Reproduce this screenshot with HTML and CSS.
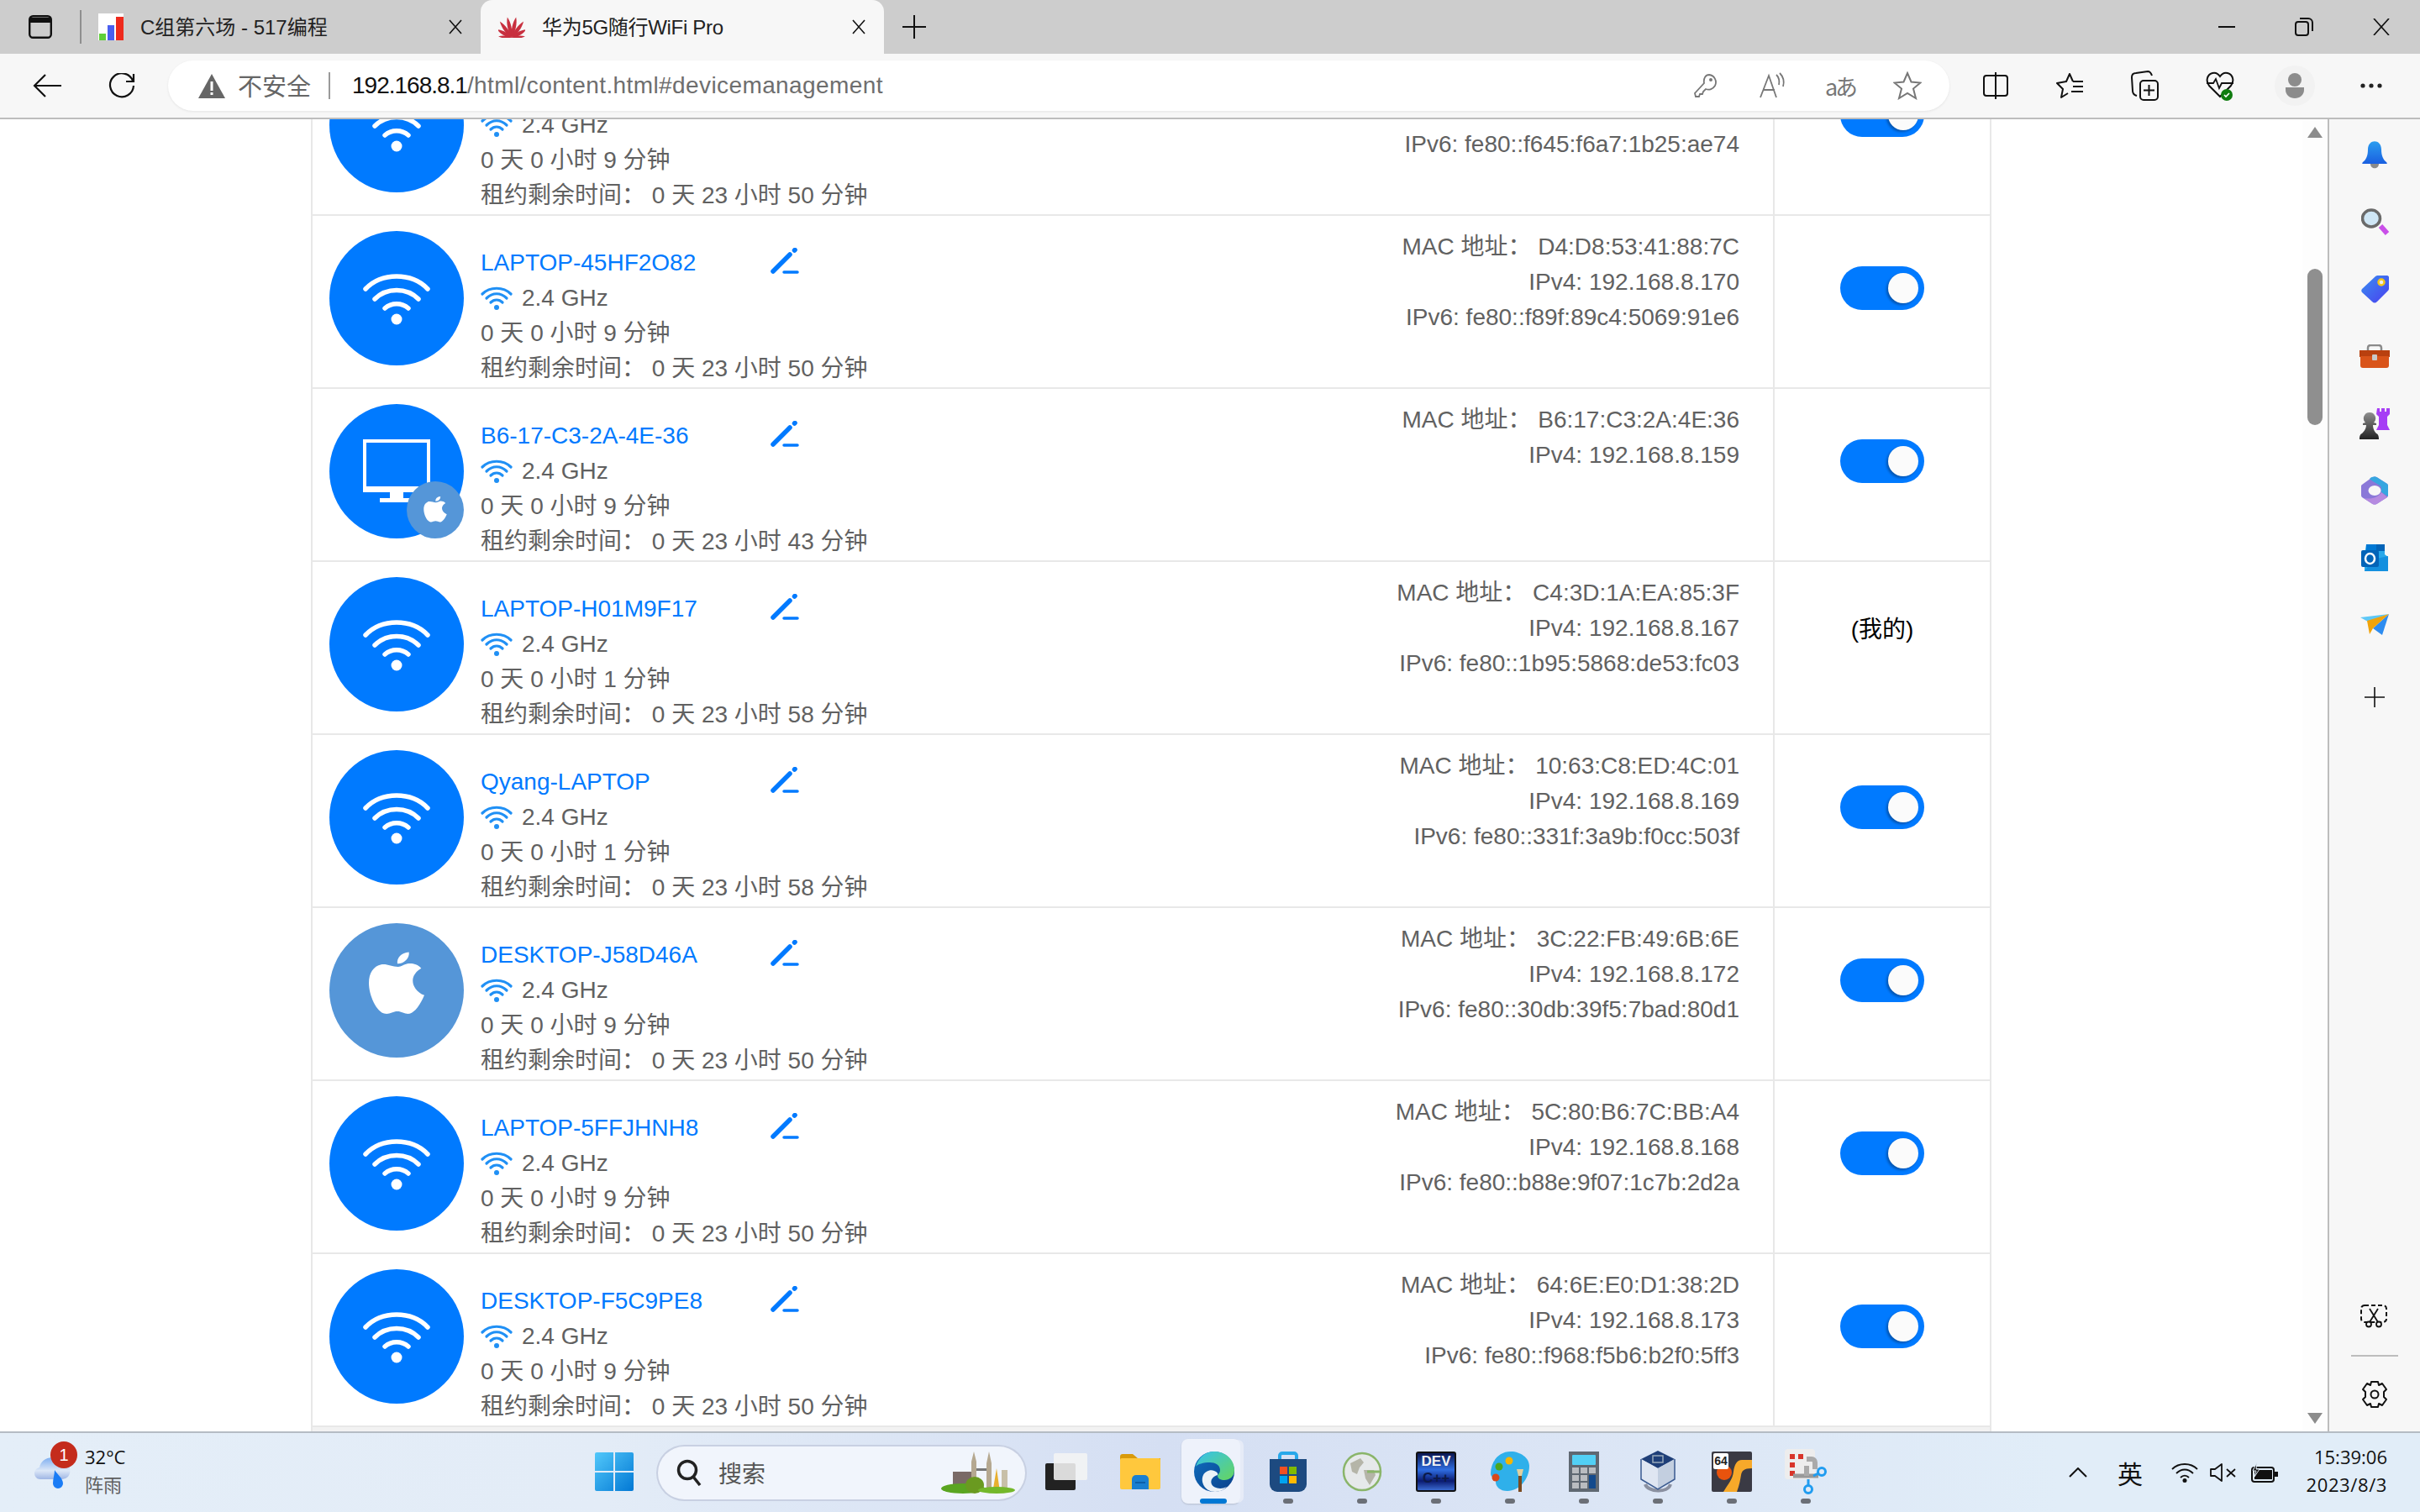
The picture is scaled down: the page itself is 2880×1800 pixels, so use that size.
FILE: index.html
```html
<!DOCTYPE html>
<html lang="zh-CN">
<head>
<meta charset="utf-8">
<title>华为5G随行WiFi Pro</title>
<link rel="stylesheet" href="styles.css">
</head>
<body>
<svg class="defs" width="0" height="0" aria-hidden="true">
  <symbol id="wifi-big" viewBox="0 0 80 64">
    <g fill="none" stroke="#fff" stroke-width="5.500" stroke-linecap="round">
      <path d="M3 21C22 1 58 1 77 21"/><path d="M14 33C28 19 52 19 66 33"/><path d="M26 44C34 37 46 37 54 44"/>
    </g><circle cx="40" cy="57" r="6.500" fill="#fff"/>
  </symbol>
  <symbol id="wifi-small" viewBox="0 0 38 28">
    <g fill="none" stroke="#2090f5" stroke-width="3.200" stroke-linecap="round">
      <path d="M2 9C11 0 27 0 36 9"/><path d="M7 14C14 7 24 7 31 14"/><path d="M12 19C16 15 22 15 26 19"/>
    </g><circle cx="19" cy="25" r="3" fill="#2090f5"/>
  </symbol>
  <symbol id="pencil" viewBox="0 0 34 32">
    <g fill="none" stroke="#007aff" stroke-linecap="round">
      <path d="M3 28L23 8" stroke-width="5.500"/><path d="M28.500 3L29 2.500" stroke-width="5.500"/><path d="M16 29H32" stroke-width="3.500"/>
    </g>
  </symbol>
  <symbol id="apple" viewBox="0 0 72 84">
    <path fill="#fff" d="M38 19C30 19 24 15 16 16C6 18 0 27 0 40C0 56 10 78 21 80C27 81 31 77 37 77C43 77 47 81 53 80C60 78 67 68 72 56C62 52 57 44 57 37C57 31 61 25 68 21C63 15 55 14 50 15C45 16 42 19 38 19Z"/>
    <path fill="#fff" d="M37 15C36 7 42 1 52 0C53 8 46 15 37 15Z"/>
  </symbol>
</svg>

<header class="tabstrip">
  <div class="tab-menu">
    <svg width="28" height="28" viewBox="0 0 28 28"><rect x="1.200" y="1.200" width="25.600" height="25.600" rx="4" fill="none" stroke="#111" stroke-width="2.400"/><path d="M2 3h24v6H2z" fill="#111"/></svg>
  </div>
  <div class="tab-sep"></div>
  <div class="tab">
    <svg class="tab-fav" width="30" height="32" viewBox="0 0 30 32"><rect width="30" height="32" fill="#fff"/><rect x="1" y="24" width="8" height="8" fill="#5fd03a"/><rect x="11" y="14" width="8" height="18" fill="#4a5ff0"/><rect x="21" y="4" width="9" height="28" fill="#ee2a1d"/></svg>
    <span class="tab-title">C组第六场 - 517编程</span>
    <span class="tab-close"><svg width="16" height="18" viewBox="0 0 16 18"><path d="M1 1l14 16M15 1L1 17" stroke="#111" stroke-width="1.600" fill="none"/></svg></span>
  </div>
  <div class="tab tab-active">
    <svg class="tab-fav" width="32" height="26" viewBox="0 0 32 26"><g fill="#c8303f"><path d="M16 26C13 18 13 8 16 1C19 8 19 18 16 26Z" transform="rotate(-12 16 26)"/><path d="M16 26C13 18 13 8 16 1C19 8 19 18 16 26Z" transform="rotate(12 16 26)"/><path d="M16 26C13 19 13 9 16 2C19 9 19 19 16 26Z" transform="rotate(-36 16 26)"/><path d="M16 26C13 19 13 9 16 2C19 9 19 19 16 26Z" transform="rotate(36 16 26)"/><path d="M16 26C13 20 13 12 16 6C19 12 19 20 16 26Z" transform="rotate(-60 16 26)"/><path d="M16 26C13 20 13 12 16 6C19 12 19 20 16 26Z" transform="rotate(60 16 26)"/><path d="M16 26C14 21 14 15 16 10C18 15 18 21 16 26Z" transform="rotate(-84 16 26)"/><path d="M16 26C14 21 14 15 16 10C18 15 18 21 16 26Z" transform="rotate(84 16 26)"/></g></svg>
    <span class="tab-title">华为5G随行WiFi Pro</span>
    <span class="tab-close"><svg width="16" height="18" viewBox="0 0 16 18"><path d="M1 1l14 16M15 1L1 17" stroke="#111" stroke-width="1.600" fill="none"/></svg></span>
  </div>
  <div class="tab-new"><svg width="28" height="28" viewBox="0 0 28 28"><path d="M14 0v28M0 14h28" stroke="#111" stroke-width="2"/></svg></div>
  <div class="win-btns">
    <span class="win-btn"><svg width="20" height="2" viewBox="0 0 20 2"><path d="M0 1h20" stroke="#111" stroke-width="2"/></svg></span>
    <span class="win-btn"><svg width="22" height="22" viewBox="0 0 22 22"><rect x="1" y="5" width="15" height="16" rx="3" fill="none" stroke="#111" stroke-width="2"/><path d="M6 1h10a5 5 0 0 1 5 5v10" fill="none" stroke="#111" stroke-width="2"/></svg></span>
    <span class="win-btn"><svg width="20" height="20" viewBox="0 0 20 20"><path d="M1 0l18 20M19 0L1 20" stroke="#111" stroke-width="1.700" fill="none"/></svg></span>
  </div>
</header>

<nav class="toolbar">
  <span class="tool-btn"><svg width="34" height="28" viewBox="0 0 34 28"><path d="M15 1L2 14l13 13M2 14h32" fill="none" stroke="#111" stroke-width="2.200"/></svg></span>
  <span class="tool-btn"><svg width="32" height="30" viewBox="0 0 32 30"><path d="M29 9A14 14 0 1 0 30 15" fill="none" stroke="#111" stroke-width="2.200"/><path d="M30 1v9H21" fill="none" stroke="#111" stroke-width="2.200"/></svg></span>
  <div class="address">
    <svg class="warn" width="32" height="29" viewBox="0 0 32 29"><path d="M16 0L32 29H0z" fill="#666"/><path d="M14.500 9h3v11h-3zM14.500 22h3v3h-3z" fill="#fff"/></svg>
    <span class="insecure">不安全</span>
    <span class="addr-sep"></span>
    <span class="url"><b class="url-host">192.168.8.1</b>/html/content.html#devicemanagement</span>
    <div class="addr-icons">
      <span class="addr-btn"><svg width="28" height="30" viewBox="0 0 28 30"><path d="M18 2a9 9 0 0 1 7 13 9 9 0 0 1-11 4l-3 3-1 3H7l-1 3H2l-1-4L12 12C11 6 14 2 18 2z" fill="none" stroke="#777" stroke-width="1.800"/><circle cx="20" cy="8" r="2" fill="#777"/></svg></span>
      <span class="addr-btn"><svg width="32" height="32" viewBox="0 0 32 32"><path d="M1 30L11 4l9 26M4 21h14" fill="none" stroke="#777" stroke-width="1.800"/><path d="M20 3c3 3 4 7 3 12M24 1c4 4 6 9 4 16" fill="none" stroke="#777" stroke-width="1.800"/></svg></span>
      <span class="addr-btn"><span class="trans">aあ</span></span>
      <span class="addr-btn"><svg width="34" height="34" viewBox="0 0 34 34"><path d="M17 2l4.500 10.500 11 1-8.500 7 3 11.500L17 26l-10 6 3-11.500-8.500-7 11-1z" fill="none" stroke="#777" stroke-width="2"/></svg></span>
    </div>
  </div>
  <div class="tool-right">
    <span class="tool-btn"><svg width="30" height="32" viewBox="0 0 30 32"><rect x="1" y="4" width="28" height="24" rx="3" fill="none" stroke="#111" stroke-width="2"/><path d="M15 0v32" stroke="#111" stroke-width="2"/></svg></span>
    <span class="tool-btn"><svg width="34" height="30" viewBox="0 0 34 30"><path d="M20 10L16 1l-4 9L1 12l7 7-2 10 8-5" fill="none" stroke="#111" stroke-width="2" stroke-linejoin="round"/><path d="M20 10h12M20 16h12M18 22h14" stroke="#111" stroke-width="2"/></svg></span>
    <span class="tool-btn"><svg width="34" height="36" viewBox="0 0 34 36"><path d="M7 30C3 29 2 27 2 24L1 8c0-3 2-5 5-5l14-2c3 0 4 2 5 5" fill="none" stroke="#111" stroke-width="2"/><rect x="11" y="12" width="21" height="23" rx="4" fill="none" stroke="#111" stroke-width="2"/><path d="M21.500 17v13M15 23.500h13" stroke="#111" stroke-width="2"/></svg></span>
    <span class="tool-btn"><svg width="34" height="36" viewBox="0 0 34 36"><path d="M17 31L4 18C0 13 1 5 8 3c4-1 7 1 9 4 2-3 5-5 9-4 7 2 8 10 4 15L17 31z" fill="none" stroke="#111" stroke-width="2"/><path d="M1 15h8l3-5 4 11 3-6h14" fill="none" stroke="#111" stroke-width="1.800"/><circle cx="25" cy="29" r="7" fill="#107c10"/><path d="M22 29l2 2 4-4" fill="none" stroke="#fff" stroke-width="1.600"/></svg></span>
    <span class="tool-btn"><span class="avatar"><svg width="24" height="30" viewBox="0 0 24 30"><circle cx="12" cy="8" r="8" fill="#8c8c8c"/><path d="M1 17h22v3c0 6-5 10-11 10S1 26 1 20z" fill="#8c8c8c"/></svg></span></span>
    <span class="tool-btn tool-more"><svg width="26" height="6" viewBox="0 0 26 6"><circle cx="3" cy="3" r="2.600" fill="#222"/><circle cx="13" cy="3" r="2.600" fill="#222"/><circle cx="23" cy="3" r="2.600" fill="#222"/></svg></span>
  </div>
</nav>

<div class="workspace">
  <main class="viewport">
    <div class="table">

      <section class="row">
        <div class="avatar-cell"><div class="dev-circle"><svg class="ic-wifi" width="80" height="64"><use href="#wifi-big"/></svg></div></div>
        <div class="info">
          <div class="line-blank"></div>
          <div class="band"><svg width="38" height="28"><use href="#wifi-small"/></svg><span>2.4 GHz</span></div>
          <div>0 天 0 小时 9 分钟</div>
          <div>租约剩余时间： 0 天 23 小时 50 分钟</div>
        </div>
        <div class="addr"><div class="line-blank"></div><div class="line-blank"></div><div>IPv6: fe80::f645:f6a7:1b25:ae74</div></div>
        <div class="ctl"><span class="toggle"><i class="knob"></i></span></div>
      </section>

      <section class="row">
        <div class="avatar-cell"><div class="dev-circle"><svg class="ic-wifi" width="80" height="64"><use href="#wifi-big"/></svg></div></div>
        <div class="info">
          <div class="name-line"><a class="dev-name">LAPTOP-45HF2O82</a><svg class="pen" width="34" height="32"><use href="#pencil"/></svg></div>
          <div class="band"><svg width="38" height="28"><use href="#wifi-small"/></svg><span>2.4 GHz</span></div>
          <div>0 天 0 小时 9 分钟</div>
          <div>租约剩余时间： 0 天 23 小时 50 分钟</div>
        </div>
        <div class="addr"><div>MAC 地址： D4:D8:53:41:88:7C</div><div>IPv4: 192.168.8.170</div><div>IPv6: fe80::f89f:89c4:5069:91e6</div></div>
        <div class="ctl"><span class="toggle"><i class="knob"></i></span></div>
      </section>

      <section class="row">
        <div class="avatar-cell"><div class="dev-circle">
          <svg class="ic-mon" width="80" height="76" viewBox="0 0 80 76"><path d="M2 2h76v58H2z" fill="none" stroke="#fff" stroke-width="4"/><path d="M0 56h80v7H0zM32 63h16v8H32zM20 70h40v5H20z" fill="#fff"/></svg>
          <span class="os-badge"><svg width="28" height="32"><use href="#apple"/></svg></span>
        </div></div>
        <div class="info">
          <div class="name-line"><a class="dev-name">B6-17-C3-2A-4E-36</a><svg class="pen" width="34" height="32"><use href="#pencil"/></svg></div>
          <div class="band"><svg width="38" height="28"><use href="#wifi-small"/></svg><span>2.4 GHz</span></div>
          <div>0 天 0 小时 9 分钟</div>
          <div>租约剩余时间： 0 天 23 小时 43 分钟</div>
        </div>
        <div class="addr"><div>MAC 地址： B6:17:C3:2A:4E:36</div><div>IPv4: 192.168.8.159</div></div>
        <div class="ctl"><span class="toggle"><i class="knob"></i></span></div>
      </section>

      <section class="row">
        <div class="avatar-cell"><div class="dev-circle"><svg class="ic-wifi" width="80" height="64"><use href="#wifi-big"/></svg></div></div>
        <div class="info">
          <div class="name-line"><a class="dev-name">LAPTOP-H01M9F17</a><svg class="pen" width="34" height="32"><use href="#pencil"/></svg></div>
          <div class="band"><svg width="38" height="28"><use href="#wifi-small"/></svg><span>2.4 GHz</span></div>
          <div>0 天 0 小时 1 分钟</div>
          <div>租约剩余时间： 0 天 23 小时 58 分钟</div>
        </div>
        <div class="addr"><div>MAC 地址： C4:3D:1A:EA:85:3F</div><div>IPv4: 192.168.8.167</div><div>IPv6: fe80::1b95:5868:de53:fc03</div></div>
        <div class="ctl"><span class="mine">(我的)</span></div>
      </section>

      <section class="row">
        <div class="avatar-cell"><div class="dev-circle"><svg class="ic-wifi" width="80" height="64"><use href="#wifi-big"/></svg></div></div>
        <div class="info">
          <div class="name-line"><a class="dev-name">Qyang-LAPTOP</a><svg class="pen" width="34" height="32"><use href="#pencil"/></svg></div>
          <div class="band"><svg width="38" height="28"><use href="#wifi-small"/></svg><span>2.4 GHz</span></div>
          <div>0 天 0 小时 1 分钟</div>
          <div>租约剩余时间： 0 天 23 小时 58 分钟</div>
        </div>
        <div class="addr"><div>MAC 地址： 10:63:C8:ED:4C:01</div><div>IPv4: 192.168.8.169</div><div>IPv6: fe80::331f:3a9b:f0cc:503f</div></div>
        <div class="ctl"><span class="toggle"><i class="knob"></i></span></div>
      </section>

      <section class="row">
        <div class="avatar-cell"><div class="dev-circle dev-apple"><svg class="ic-apple" width="66" height="78"><use href="#apple"/></svg></div></div>
        <div class="info">
          <div class="name-line"><a class="dev-name">DESKTOP-J58D46A</a><svg class="pen" width="34" height="32"><use href="#pencil"/></svg></div>
          <div class="band"><svg width="38" height="28"><use href="#wifi-small"/></svg><span>2.4 GHz</span></div>
          <div>0 天 0 小时 9 分钟</div>
          <div>租约剩余时间： 0 天 23 小时 50 分钟</div>
        </div>
        <div class="addr"><div>MAC 地址： 3C:22:FB:49:6B:6E</div><div>IPv4: 192.168.8.172</div><div>IPv6: fe80::30db:39f5:7bad:80d1</div></div>
        <div class="ctl"><span class="toggle"><i class="knob"></i></span></div>
      </section>

      <section class="row">
        <div class="avatar-cell"><div class="dev-circle"><svg class="ic-wifi" width="80" height="64"><use href="#wifi-big"/></svg></div></div>
        <div class="info">
          <div class="name-line"><a class="dev-name">LAPTOP-5FFJHNH8</a><svg class="pen" width="34" height="32"><use href="#pencil"/></svg></div>
          <div class="band"><svg width="38" height="28"><use href="#wifi-small"/></svg><span>2.4 GHz</span></div>
          <div>0 天 0 小时 9 分钟</div>
          <div>租约剩余时间： 0 天 23 小时 50 分钟</div>
        </div>
        <div class="addr"><div>MAC 地址： 5C:80:B6:7C:BB:A4</div><div>IPv4: 192.168.8.168</div><div>IPv6: fe80::b88e:9f07:1c7b:2d2a</div></div>
        <div class="ctl"><span class="toggle"><i class="knob"></i></span></div>
      </section>

      <section class="row">
        <div class="avatar-cell"><div class="dev-circle"><svg class="ic-wifi" width="80" height="64"><use href="#wifi-big"/></svg></div></div>
        <div class="info">
          <div class="name-line"><a class="dev-name">DESKTOP-F5C9PE8</a><svg class="pen" width="34" height="32"><use href="#pencil"/></svg></div>
          <div class="band"><svg width="38" height="28"><use href="#wifi-small"/></svg><span>2.4 GHz</span></div>
          <div>0 天 0 小时 9 分钟</div>
          <div>租约剩余时间： 0 天 23 小时 50 分钟</div>
        </div>
        <div class="addr"><div>MAC 地址： 64:6E:E0:D1:38:2D</div><div>IPv4: 192.168.8.173</div><div>IPv6: fe80::f968:f5b6:b2f0:5ff3</div></div>
        <div class="ctl"><span class="toggle"><i class="knob"></i></span></div>
      </section>

      <div class="row-next"></div>
    </div>
  </main>

  <div class="scrollbar">
    <svg width="18" height="13" viewBox="0 0 18 13"><path d="M9 0l9 13H0z" fill="#8c8c8c"/></svg>
    <span class="thumb"></span>
    <svg class="arrow-down" width="18" height="13" viewBox="0 0 18 13"><path d="M0 0h18L9 13z" fill="#8c8c8c"/></svg>
  </div>

  <aside class="sidebar">
    <span class="side-btn"><svg width="30" height="33" viewBox="0 0 30 33"><defs><linearGradient id="bell" x1="0" y1="0" x2="0" y2="1"><stop offset="0" stop-color="#2a9df0"/><stop offset="1" stop-color="#1a5fe0"/></linearGradient></defs><path d="M10 27h10c0 7-10 7-10 0z" fill="#8a8a8a"/><path d="M7 10c0-13 16-13 16 0 0 7 2 12 6 15 1 1 1 2 0 2H1c-1 0-1-1 0-2 4-3 6-8 6-15z" fill="url(#bell)"/></svg></span>
    <span class="side-btn"><svg width="33" height="33" viewBox="0 0 33 33"><path d="M23 21l8 9" stroke="#c94fe8" stroke-width="6"/><ellipse cx="12" cy="12" rx="10.500" ry="10" fill="#cfe6f5" stroke="#6a6a6a" stroke-width="3.500"/></svg></span>
    <span class="side-btn"><svg width="33" height="33" viewBox="0 0 33 33"><defs><linearGradient id="tag" x1="0" y1="0" x2="1" y2="1"><stop offset="0" stop-color="#3a8ff0"/><stop offset="1" stop-color="#4a3ff0"/></linearGradient></defs><path d="M1 16L17 1c1-1 2-1 3-1h11c1 0 2 1 2 2v13c0 1 0 2-1 3L19 31c-2 2-4 2-6 0L1 20c-1-1-1-3 0-4z" fill="url(#tag)"/><circle cx="24" cy="8" r="3.500" fill="#eee" stroke="#f5c518" stroke-width="2.500"/></svg></span>
    <span class="side-btn"><svg width="36" height="28" viewBox="0 0 36 28"><path d="M10 9V4c0-2 1-3 3-3h10c2 0 3 1 3 3v5" fill="none" stroke="#8a8a8a" stroke-width="2.500"/><rect y="7" width="36" height="8" fill="#b9400f"/><path d="M1 14h34v11a3 3 0 0 1-3 3H4a3 3 0 0 1-3-3z" fill="#d9541a"/><rect x="15" y="12" width="6" height="7" rx="1" fill="#c9c9c9"/></svg></span>
    <span class="side-btn"><svg width="36" height="37" viewBox="0 0 36 37"><defs><linearGradient id="pawn" x1="0" y1="0" x2="0" y2="1"><stop offset="0" stop-color="#8f8f8f"/><stop offset="1" stop-color="#222"/></linearGradient></defs><path d="M21 0h3v4h2V0h4v4h2V0h4v7l-3 3v10l3 6H20l3-6V10l-3-3z" fill="#a63df5"/><path d="M12 5a7 7 0 0 1 5 12l3 1v2h-4c0 5 2 8 4 10 3 1 3 5 3 7H0c0-2 0-6 3-7 2-2 5-5 5-10H4v-2l3-1A7 7 0 0 1 12 5z" fill="url(#pawn)"/></svg></span>
    <span class="side-btn"><svg width="32" height="34" viewBox="0 0 32 34"><path d="M1 10L12 2c3-2 5-2 8 0l11 7c1 1 1 2 1 3v10c0 1 0 2-1 3L20 32c-3 2-5 2-8 0L1 25c-1-1-1-2-1-3V12c0-1 0-1 1-2z" fill="#8a78d8"/><path d="M10 3c3-3 7-3 10-1l11 7c1 1 1 2 1 3v12l-8-5V14C24 10 15 8 10 3z" fill="#36a6e0"/><path d="M3 26l9 6c3 2 5 2 8 0l11-7-7-6c-3 6-12 9-21 7z" fill="#b58ae0"/><ellipse cx="16" cy="17" rx="7.500" ry="6" fill="#f7f7f7"/></svg></span>
    <span class="side-btn"><svg width="32" height="32" viewBox="0 0 32 32"><path d="M6 0h22v12l4 3v17H4V12z" fill="#28a8ea"/><path d="M6 0h12v8H6z" fill="#0078d4"/><path d="M18 0h10v8H18z" fill="#0364b8"/><path d="M14 18l18-4v18H4z" fill="#1490df"/><rect y="7" width="21" height="20" rx="2" fill="#0364b8"/><ellipse cx="10.500" cy="17" rx="5.500" ry="6" fill="none" stroke="#fff" stroke-width="2.500"/></svg></span>
    <span class="side-btn"><svg width="34" height="26" viewBox="0 0 34 26"><path d="M34 0L26 25l-11-8z" fill="#2d8cf0"/><path d="M0 4l34-4L9 9z" fill="#5ec8f7"/><path d="M8 8l26-8-19 17-4 7z" fill="#f0a30a"/></svg></span>
    <span class="side-btn side-add"><svg width="24" height="24" viewBox="0 0 24 24"><path d="M12 0v24M0 12h24" stroke="#111" stroke-width="1.600"/></svg></span>
    <span class="side-tool side-snip"><svg width="34" height="28" viewBox="0 0 34 28"><rect x="1" y="1" width="30" height="20" rx="4" fill="none" stroke="#111" stroke-width="2" stroke-dasharray="5 3"/><path d="M11 5l10 16M21 5L11 21" stroke="#111" stroke-width="1.800"/><circle cx="10" cy="23.500" r="3" fill="#f7f7f7" stroke="#111" stroke-width="1.800"/><circle cx="22" cy="23.500" r="3" fill="#f7f7f7" stroke="#111" stroke-width="1.800"/></svg></span>
    <span class="side-sep"></span>
    <span class="side-tool"><svg width="34" height="34" viewBox="0 0 34 34"><path d="M13 2h8l1 4 4-2 5 7-3 3v6l3 3-5 7-4-2-1 4h-8l-1-4-4 2-5-7 3-3v-6l-3-3 5-7 4 2z" fill="none" stroke="#111" stroke-width="2" stroke-linejoin="round"/><circle cx="17" cy="17" r="4.500" fill="none" stroke="#111" stroke-width="2"/></svg></span>
  </aside>
</div>

<footer class="taskbar">
  <div class="weather">
    <span class="weather-ic">
      <svg width="50" height="46" viewBox="0 0 50 46"><defs><linearGradient id="cloud" x1="0" y1="0" x2="0" y2="1"><stop offset="0" stop-color="#7faff0"/><stop offset=".6" stop-color="#dce7f7"/><stop offset="1" stop-color="#9fb6e4"/></linearGradient></defs><path d="M10 32C2 32 0 20 9 18 11 6 28 2 33 12c9-1 14 6 12 13-2 6-6 7-12 7z" fill="url(#cloud)"/><path d="M27 21c3 5 10 10 10 16a6 6 0 0 1-12 0c0-6 2-11 2-16z" fill="#1a7cf5"/></svg>
      <b class="weather-badge">1</b>
    </span>
    <span class="weather-txt"><span>32°C</span><span class="weather-sub">阵雨</span></span>
  </div>
  <span class="tile"><svg width="46" height="46" viewBox="0 0 46 46"><defs><linearGradient id="win" x1="0" y1="0" x2="1" y2="1"><stop offset="0" stop-color="#52c8fa"/><stop offset="1" stop-color="#0278d4"/></linearGradient></defs><path d="M0 2a2 2 0 0 1 2-2h20v22H0zM24 0h20a2 2 0 0 1 2 2v20H24zM0 24h22v22H2a2 2 0 0 1-2-2zM24 24h22v20a2 2 0 0 1-2 2H24z" fill="url(#win)"/></svg></span>
  <div class="search">
    <svg width="30" height="32" viewBox="0 0 30 32"><circle cx="13" cy="13" r="10.500" fill="none" stroke="#222" stroke-width="3.500"/><path d="M20 21l8 10" stroke="#222" stroke-width="3.500"/></svg>
    <span class="search-txt">搜索</span>
    <svg class="city" width="92" height="50" viewBox="0 0 92 50"><rect x="14" y="24" width="22" height="20" fill="#7a6a66"/><path d="M36 44V12l3-12 3 12v32zM54 44V14l3-14 3 14v30z" fill="#b5a890"/><rect x="42" y="20" width="12" height="3" fill="#777"/><rect x="72" y="22" width="7" height="24" fill="#c8c0a8"/><path d="M62 44l4-24 4 28h-8z" fill="#e8b030"/><ellipse cx="26" cy="44" rx="26" ry="6" fill="#5aa520"/><ellipse cx="40" cy="40" rx="11" ry="10" fill="#6a9a20"/><ellipse cx="66" cy="46" rx="22" ry="4" fill="#74b82a"/></svg>
  </div>
  <span class="tile tile-taskview"><svg width="50" height="44" viewBox="0 0 50 44"><rect x="0" y="12" width="36" height="32" rx="2" fill="#222"/><rect x="10" y="0" width="40" height="32" rx="2" fill="#f4f4f4" opacity=".88"/></svg></span>
  <span class="tile"><svg width="48" height="42" viewBox="0 0 48 42"><path d="M0 3a3 3 0 0 1 3-3h12l6 5h27v5H0z" fill="#d99a0a"/><rect y="5" width="48" height="37" rx="2" fill="#ffc83d"/><path d="M14 42V30a5 5 0 0 1 5-5h10a5 5 0 0 1 5 5v12z" fill="#1a7fd0"/><rect x="18" y="33" width="12" height="2" fill="#0d5fa8"/></svg></span>
  <span class="tile tile-active"><svg width="48" height="48" viewBox="0 0 48 48"><defs><linearGradient id="edge1" x1="0" y1="0" x2="1" y2="1"><stop offset="0" stop-color="#35c1f1"/><stop offset="1" stop-color="#66d65c"/></linearGradient><linearGradient id="edge2" x1="0" y1="0" x2="1" y2="1"><stop offset="0" stop-color="#0f6fc0"/><stop offset="1" stop-color="#0a3f8a"/></linearGradient></defs><circle cx="24" cy="24" r="24" fill="url(#edge2)"/><path d="M2 18C6 6 14 0 24 0c14 0 24 10 24 22 0 8-6 12-12 12-4 0-8-2-8-5 0-2 3-3 3-7 0-6-6-9-12-9-8 0-15 2-17 5z" fill="url(#edge1)"/><path d="M28 28c-6 2-9 6-7 11 2 4 10 7 18 3-3 3-8 6-14 6-12 0-18-12-14-20 2-4 8-7 13-5 3 1 5 3 4 5z" fill="#fff" opacity=".92"/></svg><i class="run-bar"></i></span>
  <span class="tile"><svg width="48" height="48" viewBox="0 0 48 48"><path d="M14 10V5a3 3 0 0 1 3-3h14a3 3 0 0 1 3 3v5" fill="none" stroke="#28a8ea" stroke-width="4"/><path d="M2 9h44v30a9 9 0 0 1-9 9H11a9 9 0 0 1-9-9z" fill="#1d4a80"/><rect x="14" y="18" width="9" height="9" fill="#f25022"/><rect x="25" y="18" width="9" height="9" fill="#7fba00"/><rect x="14" y="29" width="9" height="9" fill="#00a4ef"/><rect x="25" y="29" width="9" height="9" fill="#ffb900"/></svg><i class="run-dot"></i></span>
  <span class="tile"><svg width="48" height="48" viewBox="0 0 48 48"><circle cx="24" cy="24" r="22" fill="#e6e9ea" stroke="#8ab56a" stroke-width="2.500"/><path d="M10 14l12-6 4 5-5 6-3 8-6-3zM26 22l12 0 2 6-7 12-5-8z" fill="#b5b5a8"/><path d="M30 24h16" stroke="#8ab56a" stroke-width="3"/></svg><i class="run-dot"></i></span>
  <span class="tile"><span class="dev-ic"><b>DEV</b><b class="dev-cpp">C++</b></span><i class="run-dot"></i></span>
  <span class="tile"><svg width="46" height="48" viewBox="0 0 46 48"><path d="M24 0C8 0 0 14 0 26c0 6 6 4 6 10 0 6 5 11 14 11 14 0 26-14 26-30C46 8 36 0 24 0z" fill="#2fb0ea"/><circle cx="22" cy="11" r="4.500" fill="#f5b400"/><circle cx="10" cy="18" r="4.500" fill="#4ca51e"/><circle cx="6" cy="31" r="4.500" fill="#d8491a"/><path d="M31 21h8l-2 8h-4z" fill="#e0d0a0"/><rect x="33" y="29" width="4" height="19" fill="#7a4a20"/></svg><i class="run-dot"></i></span>
  <span class="tile"><svg width="36" height="48" viewBox="0 0 36 48"><rect width="36" height="48" fill="#5f6872"/><rect x="4" y="4" width="28" height="12" rx="1" fill="#52d0f5"/><g fill="#b9bcc0"><rect x="4" y="19" width="8" height="7"/><rect x="14" y="19" width="8" height="7"/><rect x="24" y="19" width="8" height="7"/><rect x="4" y="28" width="8" height="7"/><rect x="14" y="28" width="8" height="7"/><rect x="4" y="37" width="8" height="7"/><rect x="14" y="37" width="8" height="7"/></g><rect x="24" y="28" width="8" height="16" fill="#134a8c"/></svg><i class="run-dot"></i></span>
  <span class="tile"><svg width="42" height="50" viewBox="0 0 42 50"><path d="M6 40c3 9 27 11 30 0" fill="none" stroke="#8a90a0" stroke-width="4"/><path d="M21 0l20 10L21 21 1 10z" fill="#1f3f78"/><path d="M1 10l20 11v25L1 34z" fill="#dfe6f2"/><path d="M41 10L21 21v25l20-12z" fill="#c3cfe0"/><path d="M1 10v24l20 12 20-12V10" fill="none" stroke="#3a5a90" stroke-width="1.500"/><rect x="15" y="6" width="12" height="8" fill="none" stroke="#9ab" stroke-width="1.500"/></svg><i class="run-dot"></i></span>
  <span class="tile"><svg width="48" height="48" viewBox="0 0 48 48"><rect width="48" height="48" rx="2" fill="#3a3a44"/><path d="M48 10H36c-6 0-9 6-10 14-1 9-6 14-12 24h16c3-8 4-14 5-20 1-5 3-8 13-8z" fill="#f7a92a"/><circle cx="15" cy="25" r="9" fill="#e8530d"/><rect x="2" y="2" width="18" height="19" rx="2" fill="#fff"/><text x="11" y="16" class="aida-txt">64</text></svg><i class="run-dot"></i></span>
  <span class="tile"><svg width="50" height="54" viewBox="0 0 50 54"><rect width="36" height="36" rx="4" fill="#ededed"/><path d="M6 6h6v6H6zM16 6h6v6h-6zM6 16h6v6H6zM6 26h6v6H6z" fill="#d8352a"/><path d="M26 12h6a4 4 0 0 1 4 4v8" fill="none" stroke="#aaa" stroke-width="6"/><path d="M10 32h30" stroke="#999" stroke-width="5"/><path d="M26 20v12" stroke="#aaa" stroke-width="6"/><circle cx="44" cy="27" r="4.500" fill="none" stroke="#1f9cf0" stroke-width="3"/><circle cx="28" cy="48" r="4.500" fill="none" stroke="#1f9cf0" stroke-width="3"/><path d="M28 36v8M34 32l6-3" stroke="#1f9cf0" stroke-width="3"/></svg><i class="run-dot"></i></span>
  <div class="tray">
    <svg class="tray-chev" width="22" height="12" viewBox="0 0 22 12"><path d="M1 11L11 1l10 10" fill="none" stroke="#111" stroke-width="2"/></svg>
    <span class="ime">英</span>
    <svg class="tray-wifi" width="32" height="23" viewBox="0 0 32 23"><g fill="none" stroke="#111" stroke-width="1.800"><path d="M1 7C9-1 23-1 31 7"/><path d="M6 12C12 6 20 6 26 12"/><path d="M11 17C14 14 18 14 21 17"/></g><circle cx="16" cy="20.500" r="2.500" fill="#111"/></svg>
    <svg class="tray-vol" width="31" height="22" viewBox="0 0 31 22"><path d="M1 7h5l8-6v20l-8-6H1z" fill="none" stroke="#111" stroke-width="1.800" stroke-linejoin="round"/><path d="M20 7l10 9M30 7l-10 9" stroke="#111" stroke-width="1.800"/></svg>
    <svg class="tray-bat" width="32" height="24" viewBox="0 0 32 24"><rect x="1" y="6" width="26" height="17" rx="3" fill="none" stroke="#111" stroke-width="2"/><path d="M4 9h21v11H4z" fill="#111"/><rect x="28" y="11" width="4" height="6" fill="#111"/><path d="M7 0L2 10h4l-2 7 6-9H6z" fill="#111" stroke="#e0ecf8" stroke-width="1"/></svg>
    <span class="clock"><span>15:39:06</span><span class="clock-date">2023/8/3</span></span>
  </div>
</footer>
</body>
</html>
```

FILE: styles.css
```css
* { box-sizing: border-box; }
html, body { margin: 0; height: 100%; overflow: hidden; }
body {
  width: 2880px;
  height: 1800px;
  display: flex;
  flex-direction: column;
  font-family: "Liberation Sans", "Noto Sans CJK SC", sans-serif;
  background: #fff;
  color: #111;
}
.defs { position: absolute; }
svg { display: block; flex: none; }

/* tab strip */
.tabstrip {
  height: 64px;
  flex: none;
  display: flex;
  align-items: center;
  background: #cdcdcd;
}
.tab-menu { width: 96px; height: 64px; padding-left: 34px; display: flex; align-items: center; flex: none; }
.tab-sep { width: 2px; height: 40px; background: #8f8f8f; flex: none; margin-left: -1px; }
.tab {
  width: 475px;
  height: 64px;
  flex: none;
  display: flex;
  align-items: center;
  font-size: 24px;
  color: #222;
  padding-left: 20px;
}
.tab-fav { margin-right: 20px; }
.tab-title { flex: 1; white-space: nowrap; margin-top: -3px; }
.tab-close { width: 38px; display: flex; }
.tab-active {
  width: 480px;
  background: #f7f7f7;
  border-radius: 14px 14px 0 0;
  padding-left: 21px;
}
.tab-active .tab-title { letter-spacing: -.3px; }
.tab-new { margin-left: 22px; flex: none; }
.win-btns { margin-left: auto; display: flex; }
.win-btn { width: 92px; height: 64px; display: flex; align-items: center; justify-content: center; }

/* toolbar */
.toolbar {
  height: 78px;
  flex: none;
  display: flex;
  align-items: flex-start;
  background: #f7f7f7;
  border-bottom: 2px solid #bdbdbd;
  padding: 8px 0 0 11px;
}
.tool-btn { width: 89px; height: 60px; flex: none; display: flex; align-items: center; justify-content: center; }
.address {
  width: 2120px;
  height: 60px;
  margin-left: 11px;
  flex: none;
  background: #fff;
  border-radius: 30px;
  box-shadow: 0 1px 3px rgba(0,0,0,.08);
  display: flex;
  align-items: center;
  padding: 0 10px 0 36px;
}
.warn { margin-right: 15px; }
.insecure { font-size: 29px; color: #666; font-family: "Noto Sans CJK SC", sans-serif; width: 87px; white-space: nowrap; margin-top: -2px; }
.addr-sep { width: 2px; height: 32px; background: #9a9a9a; margin: 0 26px 0 21px; }
.url { font-size: 28px; color: #6e6e6e; white-space: nowrap; letter-spacing: .4px; }
.url-host { font-weight: 400; color: #111; letter-spacing: -1px; }
.addr-icons { margin-left: auto; display: flex; }
.addr-btn { width: 80px; height: 60px; display: flex; align-items: center; justify-content: center; }
.trans { font-size: 27px; color: #777; font-family: "Noto Sans CJK JP", sans-serif; letter-spacing: -3px; white-space: nowrap; }
.tool-right { display: flex; margin-left: 10px; flex: none; }
.tool-more { padding-left: 4px; }
.avatar { width: 48px; height: 48px; border-radius: 50%; background: #f2f2f2; display: flex; align-items: center; justify-content: center; }

/* page */
.workspace { flex: 1; min-height: 0; display: flex; }
.viewport { width: 2740px; flex: none; overflow: hidden; background: #fff; padding-left: 370px; }
.table {
  width: 2000px;
  margin-top: -91px;
  border-left: 2px solid #e8e8e8;
  border-right: 2px solid #e8e8e8;
  font-size: 28px;
  line-height: 42px;
  color: #616161;
}
.row {
  height: 206px;
  display: flex;
  border-bottom: 2px solid #e8e8e8;
}
.row-next { height: 20px; background: #f2f2f2; }
.line-blank { height: 42px; }
.avatar-cell { width: 200px; flex: none; padding: 18px 0 0 20px; }
.dev-circle {
  width: 160px;
  height: 160px;
  border-radius: 50%;
  background: #007aff;
  display: flex;
  align-items: center;
  justify-content: center;
  position: relative;
}
.dev-apple { background: #5596d8; }
.ic-apple { margin-top: -14px; }
.os-badge {
  position: absolute;
  right: 0;
  bottom: 0;
  width: 68px;
  height: 68px;
  border-radius: 50%;
  background: #5596d8;
  display: flex;
  align-items: center;
  justify-content: center;
}
.info { width: 680px; flex: none; padding-top: 35px; white-space: nowrap; }
.name-line { display: flex; align-items: center; }
.dev-name { width: 345px; color: #007aff; flex: none; }
.pen { margin-top: -4px; }
.band { display: flex; align-items: center; gap: 11px; }
.addr { width: 858px; flex: none; text-align: right; padding: 16px 40px 0 0; white-space: nowrap; }
.ctl {
  flex: 1;
  border-left: 2px solid #e8e8e8;
  display: flex;
  justify-content: center;
  padding-top: 60px;
}
.toggle {
  width: 100px;
  height: 52px;
  border-radius: 26px;
  background: #007aff;
  display: flex;
  align-items: center;
  justify-content: flex-end;
  padding-right: 7px;
}
.knob { width: 36px; height: 36px; border-radius: 50%; background: #fbfbfb; box-shadow: -2px 2px 3px rgba(0,0,0,.3); }
.mine { color: #000; font-size: 28px; line-height: 42px; }

/* scrollbar */
.scrollbar {
  width: 32px;
  flex: none;
  background: #fdfdfd;
  border-right: 2px solid #bdbdbd;
  display: flex;
  flex-direction: column;
  align-items: center;
  padding: 9px 0 9px;
}
.thumb { width: 18px; height: 186px; border-radius: 9px; background: #8f8f8f; margin-top: 156px; }
.arrow-down { margin-top: auto; }

/* sidebar */
.sidebar {
  width: 108px;
  flex: none;
  background: #f7f7f7;
  display: flex;
  flex-direction: column;
  align-items: center;
  padding: 2px 0 15px;
}
.side-btn { width: 108px; height: 80px; flex: none; display: flex; align-items: center; justify-content: center; }
.side-tool { width: 108px; height: 58px; flex: none; display: flex; align-items: center; justify-content: center; }
.side-add { margin-top: 6px; }
.side-snip { margin-top: auto; }
.side-sep { width: 56px; height: 2px; background: #bdbdbd; margin: 17px 0 16px; flex: none; }

/* taskbar */
.taskbar {
  height: 96px;
  flex: none;
  display: flex;
  align-items: center;
  border-top: 2px solid #b5bcc4;
  background: linear-gradient(90deg, #e4eef8 0%, #e3ecf7 25%, #d5dff3 48%, #dbe5f5 65%, #e1edf8 85%, #e1edf8 100%);
}
.weather { width: 687px; flex: none; display: flex; align-items: center; padding-left: 38px; height: 94px; }
.weather-ic { width: 63px; height: 60px; position: relative; flex: none; padding-top: 6px; }
.weather-badge {
  position: absolute;
  left: 22px;
  top: -7px;
  width: 32px;
  height: 32px;
  border-radius: 50%;
  background: #c42b1c;
  color: #fff;
  font-weight: 400;
  font-size: 20px;
  line-height: 32px;
  text-align: center;
}
.weather-txt { display: flex; flex-direction: column; font-size: 22px; line-height: 33px; color: #111; font-family: "Open Sans", "Noto Sans CJK SC", sans-serif; margin-top: -4px; }
.weather-sub { color: #5f5f5f; }
.tile {
  width: 88px;
  height: 94px;
  flex: none;
  display: flex;
  align-items: center;
  justify-content: center;
  position: relative;
}
.tile-taskview { margin-left: 5px; }
.tile-active::before {
  content: "";
  position: absolute;
  left: 5px;
  right: 13px;
  top: 7px;
  bottom: 10px;
  background: #eef2fb;
  border-radius: 8px;
  box-shadow: 5px 0 0 -1px #e6ebf7, 0 1px 2px rgba(0,0,0,.15);
}
.tile-active svg { position: relative; }
.tile > svg { margin-top: -2px; }
.run-dot {
  position: absolute;
  left: 38px;
  bottom: 10px;
  width: 12px;
  height: 6px;
  border-radius: 3px;
  background: #6b6f76;
}
.run-bar {
  position: absolute;
  left: 27px;
  bottom: 10px;
  width: 32px;
  height: 6px;
  border-radius: 3px;
  background: #0078d4;
}
.search {
  width: 437px;
  height: 63px;
  margin-left: 8px;
  flex: none;
  background: #f1f5fc;
  border-radius: 32px;
  box-shadow: 0 0 0 2px #c8d0e2;
  display: flex;
  align-items: center;
  padding-left: 22px;
}
.search-txt { font-size: 28px; color: #555; margin-left: 20px; font-family: "Noto Sans CJK SC", sans-serif; }
.city { margin-left: auto; margin-right: 8px; }
.dev-ic {
  width: 48px;
  height: 48px;
  margin-top: -2px;
  background: linear-gradient(180deg, #0a1650 0%, #2f6de0 45%, #0a1a70 75%, #3a6ad0 100%);
  border: 2px solid #111;
  border-radius: 3px;
  display: flex;
  flex-direction: column;
  align-items: center;
  color: #f2f2f2;
  font: 700 17px/20px "Liberation Sans", sans-serif;
}
.dev-cpp { color: #0c1a4a; }
.aida-txt { font: 700 14px "Liberation Sans", sans-serif; fill: #222; text-anchor: middle; }
.tray { margin-left: auto; display: flex; align-items: center; height: 94px; padding-right: 39px; }
.tray-chev { margin-right: 36px; }
.ime { font-size: 30px; color: #111; margin-right: 34px; font-family: "Noto Sans CJK SC", sans-serif; }
.tray-wifi { margin-right: 14px; }
.tray-vol { margin-right: 18px; }
.tray-bat { margin-right: 34px; }
.clock { display: flex; flex-direction: column; align-items: flex-end; font-size: 22px; line-height: 33px; color: #111; font-family: "Open Sans", sans-serif; width: 96px; white-space: nowrap; margin-top: -4px; }
.clock-date { letter-spacing: .6px; }
```
